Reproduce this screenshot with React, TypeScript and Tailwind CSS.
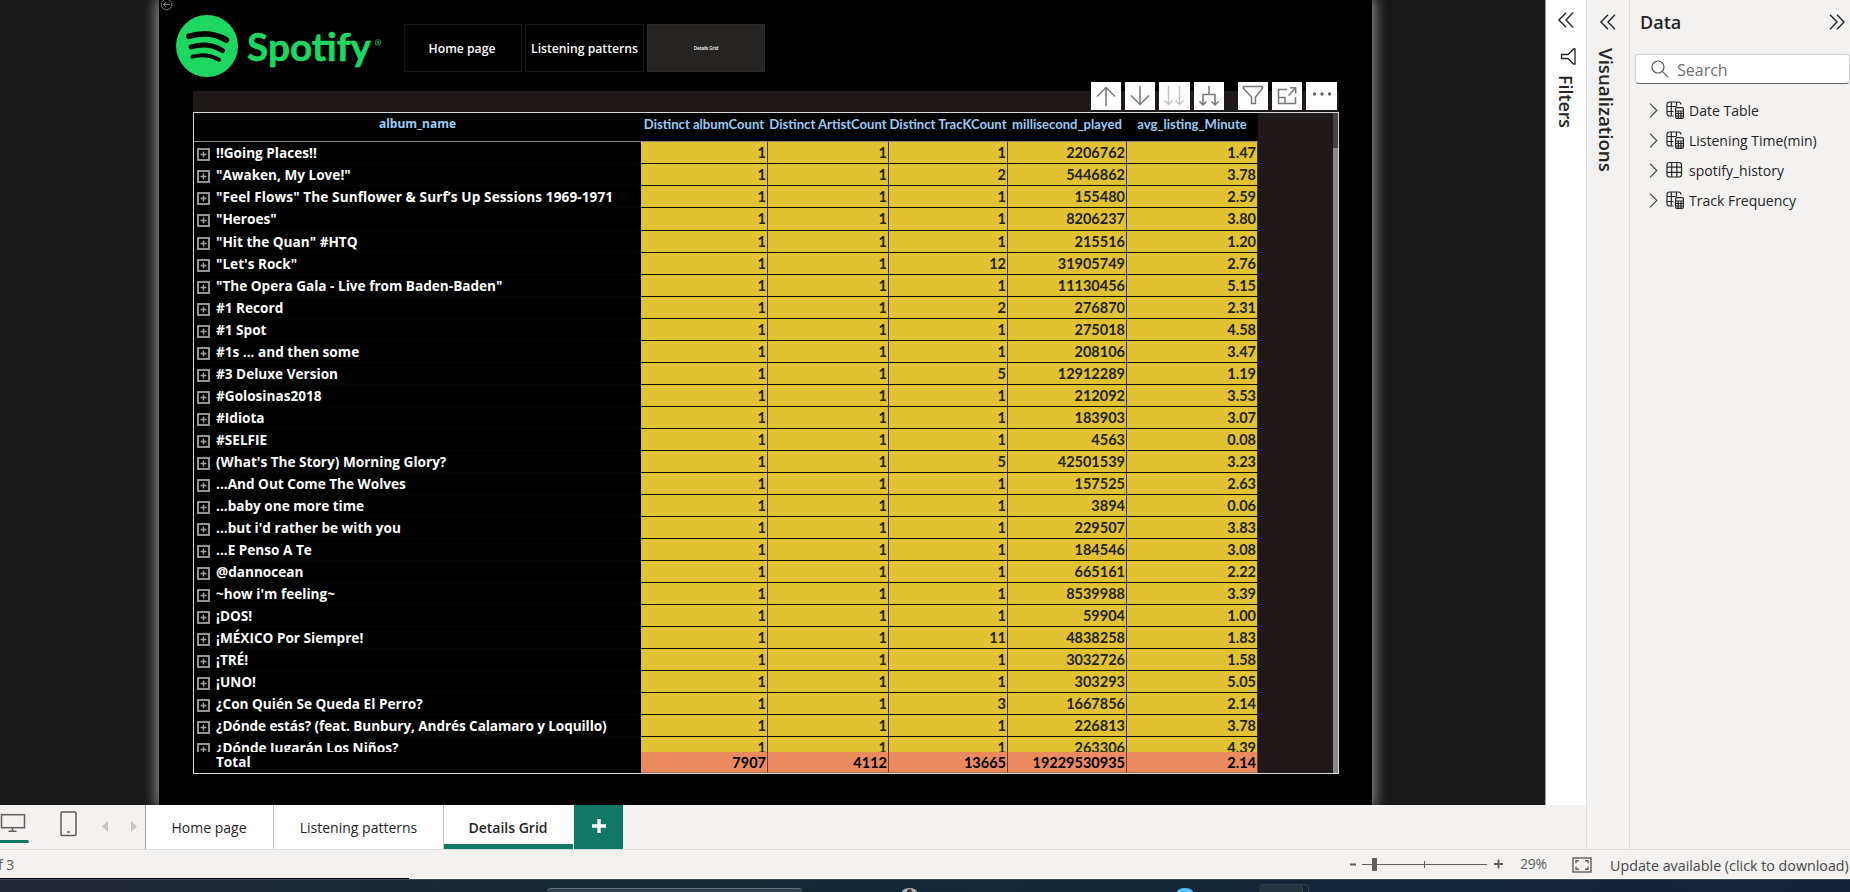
import React from "react";

type Row = [string, number, number, number, string, string];

const rows: Row[] = [
  ["!!Going Places!!", 1, 1, 1, "2206762", "1.47"],
  ["\"Awaken, My Love!\"", 1, 1, 2, "5446862", "3.78"],
  ["\"Feel Flows\" The Sunflower & Surf’s Up Sessions 1969-1971", 1, 1, 1, "155480", "2.59"],
  ["\"Heroes\"", 1, 1, 1, "8206237", "3.80"],
  ["\"Hit the Quan\" #HTQ", 1, 1, 1, "215516", "1.20"],
  ["\"Let's Rock\"", 1, 1, 12, "31905749", "2.76"],
  ["\"The Opera Gala - Live from Baden-Baden\"", 1, 1, 1, "11130456", "5.15"],
  ["#1 Record", 1, 1, 2, "276870", "2.31"],
  ["#1 Spot", 1, 1, 1, "275018", "4.58"],
  ["#1s ... and then some", 1, 1, 1, "208106", "3.47"],
  ["#3 Deluxe Version", 1, 1, 5, "12912289", "1.19"],
  ["#Golosinas2018", 1, 1, 1, "212092", "3.53"],
  ["#Idiota", 1, 1, 1, "183903", "3.07"],
  ["#SELFIE", 1, 1, 1, "4563", "0.08"],
  ["(What's The Story) Morning Glory?", 1, 1, 5, "42501539", "3.23"],
  ["...And Out Come The Wolves", 1, 1, 1, "157525", "2.63"],
  ["...baby one more time", 1, 1, 1, "3894", "0.06"],
  ["...but i'd rather be with you", 1, 1, 1, "229507", "3.83"],
  ["...E Penso A Te", 1, 1, 1, "184546", "3.08"],
  ["@dannocean", 1, 1, 1, "665161", "2.22"],
  ["~how i'm feeling~", 1, 1, 1, "8539988", "3.39"],
  ["¡DOS!", 1, 1, 1, "59904", "1.00"],
  ["¡MÉXICO Por Siempre!", 1, 1, 11, "4838258", "1.83"],
  ["¡TRÉ!", 1, 1, 1, "3032726", "1.58"],
  ["¡UNO!", 1, 1, 1, "303293", "5.05"],
  ["¿Con Quién Se Queda El Perro?", 1, 1, 3, "1667856", "2.14"],
  ["¿Dónde estás? (feat. Bunbury, Andrés Calamaro y Loquillo)", 1, 1, 1, "226813", "3.78"],
  ["¿Dónde Jugarán Los Niños?", 1, 1, 1, "263306", "4.39"],
];

const headers = ["Distinct albumCount", "Distinct ArtistCount", "Distinct TracKCount", "millisecond_played", "avg_listing_Minute"];
const totals = ["7907", "4112", "13665", "19229530935", "2.14"];
const tableGrid = "grid grid-cols-[447px_127px_121px_119px_119px_131px]";

function nameTracking(name: string) {
  if (name.startsWith("\"Feel")) return "tracking-[0.1px]";
  if (name.startsWith("¿Dónde estás")) return "tracking-[-0.09px]";
  return "";
}

function ExpandBox() {
  return (
    <svg className="mt-[6px] h-[13px] w-[13px] shrink-0" viewBox="0 0 13 13" fill="none" stroke="#a3a3a3">
      <rect x="1" y="1" width="11" height="11" strokeWidth="1.8" />
      <path d="M3.5 6.5h6M6.5 3.5v6" strokeWidth="1.4" />
    </svg>
  );
}

function Chevrons({ flip }: { flip?: boolean }) {
  return (
    <svg className="h-4 w-4" viewBox="0 0 16 16" fill="none" stroke="#252423" strokeWidth="1.4">
      {flip ? <path d="M1 .8 8 8l-7 7.2M8 .8 15 8l-7 7.2" /> : <path d="M8 .8 1 8l7 7.2M15 .8 8 8l7 7.2" />}
    </svg>
  );
}

function SpotifyLogo() {
  return (
    <svg className="h-[66px] w-[212px]" viewBox="0 0 212 66">
      <circle cx="31" cy="33" r="31" fill="#1ed760" />
      <g fill="none" stroke="#000" strokeLinecap="round">
        <path d="M13 23.3Q34 17 50.3 27" strokeWidth="5.8" />
        <path d="M15 34Q32 28.8 46.6 37.6" strokeWidth="4.9" />
        <path d="M16.4 43.6Q31 39.6 43 46.8" strokeWidth="4" />
      </g>
      <text x="71" y="48" textLength="124" lengthAdjust="spacingAndGlyphs" fill="#1ed760" stroke="#1ed760" strokeWidth=".6" className="font-['Lato',sans-serif] text-[39px] font-bold">Spotify</text>
      <circle cx="202" cy="29.5" r="2.8" fill="none" stroke="#1aa34a" strokeWidth=".9" />
      <text x="202" y="31.2" textAnchor="middle" fill="#1ed760" className="font-['Lato',sans-serif] text-[4px] font-bold">R</text>
    </svg>
  );
}

function Tool({ children, className = "" }: { children: React.ReactNode; className?: string }) {
  return (
    <div className={`flex h-7 w-[30.4px] items-center justify-center bg-white ${className}`}>
      <svg className="h-[22px] w-[24px]" viewBox="0 0 24 22" fill="none" stroke="#777" strokeWidth="1.5">{children}</svg>
    </div>
  );
}

function TableIcon({ calc }: { calc: boolean }) {
  return calc ? (
    <svg className="h-[18px] w-[18px]" viewBox="0 0 18 18" fill="none" stroke="#252423" strokeWidth="1.2">
      <path d="M7.5 15H3.500A2.500 2.500 0 0 1 1 12.500v-9A2.500 2.500 0 0 1 3.500 1H12.500A2.500 2.500 0 0 1 15 3.500M5.300 1v14M10.500 1v4.500M1 5.500h9M1 10.500h6.500" />
      <rect x="9.6" y="6.6" width="7.8" height="10.8" rx="1.4" fill="#f3f2f1" />
      <path d="M9.6 10h7.8M9.6 12.5h7.8M9.6 15h7.8M12.300 10v7M14.900 10v7" />
    </svg>
  ) : (
    <svg className="h-[18px] w-[18px]" viewBox="0 0 18 18" fill="none" stroke="#252423" strokeWidth="1.2">
      <rect x="1" y="1.5" width="14.5" height="14.5" rx="2.5" />
      <path d="M5.700 1.500V16M10.800 1.500V16M1 6.200h14.500M1 11.300h14.500" />
    </svg>
  );
}

function ReportPage() {
  return (
    <div className="ml-[159px] flex h-[805px] w-[1213px] flex-col bg-black shadow-[0_0_13px_2px_rgba(255,255,255,0.58)]">
      <div className="flex h-[91px] items-start">
        <svg className="mt-[-2px] ml-[1px] h-[13px] w-[13px]" viewBox="0 0 13 13" fill="none" stroke="#777" strokeWidth="1">
          <circle cx="6.5" cy="6.5" r="5.3" />
          <path d="M10 6.500H3.500M6 4 3.500 6.500 6 9" />
        </svg>
        <div className="mt-[13px] ml-[3px]"><SpotifyLogo /></div>
        <div className="mt-6 ml-[16px] flex gap-[3px] font-['Open_Sans',sans-serif] text-[12.2px] font-semibold text-white">
          <div className="flex h-[48px] w-[118px] items-center justify-center border border-[#141414] pt-[2px] pr-[2px]">Home page</div>
          <div className="flex h-[48px] w-[119px] items-center justify-center border border-[#141414] pt-[2px] whitespace-nowrap">Listening patterns</div>
          <div className="flex h-[48px] w-[118px] items-center justify-center border border-[#2d2c2b] bg-[#252423] text-[4.6px] tracking-[-0.1px]">Details Grid</div>
        </div>
      </div>
      <div className="ml-[34px] flex h-[21px] w-[1146px] items-end bg-[#1f1a19]">
        <div className="mb-[2px] ml-[897.5px] flex gap-[4px]">
          <Tool><path d="M12 21V2.500M3 11.500l9-9 9 9" /></Tool>
          <Tool><path d="M12 1v18.500M3 10.500l9 9 9-9" /></Tool>
          <Tool><path stroke="#c6c6c6" d="M6.500 1v19M2.500 15.500l4 4 4-4M17.500 1v19M13.500 15.500l4 4 4-4" /></Tool>
          <Tool><path d="M12 1v8.500M6 20V9.500h12V20M2.500 16.500 6 20l3.500-3.500M14.500 16.500 18 20l3.500-3.500" /></Tool>
          <Tool className="ml-[9.6px]"><path d="M2.500 1.500h19v2L14.500 12v6.500h-4V12l-8-8.500z" /></Tool>
          <Tool><path d="M12 4.500H3.500v14h17V12M3.500 12.500H10v6M13.500 10.500l7-7.500M15 2.800h5.700v5.700" /></Tool>
          <Tool><g fill="#666" stroke="none"><circle cx="4.5" cy="9" r="1.7" /><circle cx="12" cy="9" r="1.7" /><circle cx="19.5" cy="9" r="1.7" /></g></Tool>
        </div>
      </div>
      <div className="ml-[34px] flex h-[662px] w-[1146px] border border-[#d8d8d8] bg-[#1f1a19]">
        <div className="flex h-[660px] w-[1064px] flex-col font-['Lato',sans-serif] font-bold">
          <div className={`${tableGrid} h-[29.4px] shrink-0 border-b border-[#8c8484] bg-black text-center text-[13.1px] leading-[22px] text-[#9acbf7]`}>
            <div className="font-['Open_Sans',sans-serif] text-[12px]">album_name</div>
            {headers.map((h) => <div key={h} className="pr-px whitespace-nowrap">{h}</div>)}
          </div>
          <div className="h-[609.6px] shrink-0 overflow-hidden">
            {rows.map(([name, ...vals]) => (
              <div key={name} className={`${tableGrid} h-[22.04px] grid-rows-[22.04px]`}>
                <div className="flex gap-[6px] border-b border-[#050505] bg-black pl-[3px] font-['Open_Sans',sans-serif] text-[13.6px] leading-[22px] whitespace-nowrap text-white">
                  <ExpandBox />
                  <span className={nameTracking(name)}>{name}</span>
                </div>
                {vals.map((v, i) => (
                  <div key={i} className="border-r border-b border-r-[#3a330f] border-b-[#0e0d05] bg-[#e0c232] pr-px text-right text-[14.5px] leading-[22px] text-[#252423]">{v}</div>
                ))}
              </div>
            ))}
          </div>
          <div className={`${tableGrid} h-[21px] shrink-0 grid-rows-[21px] text-black`}>
            <div className="bg-black pl-[22px] font-['Open_Sans',sans-serif] text-[13.6px] leading-[20px] text-white">Total</div>
            {totals.map((t) => (
              <div key={t} className="border-r border-b border-r-[#6b3f2c] border-b-[#b06a4b] bg-[#eb895f] pr-px text-right text-[14.5px] leading-[21px]">{t}</div>
            ))}
          </div>
        </div>
        <div className="ml-auto flex w-[5px] flex-col bg-[#8a8886]">
          <div className="h-[35px] bg-[#454240]" />
        </div>
      </div>
    </div>
  );
}

function TabBar() {
  return (
    <div className="flex h-[44px] bg-[#f3f2f1] font-['Open_Sans',sans-serif] text-sm text-[#252423]">
      <div className="flex w-[146px] border-r border-[#a19f9d]">
        <div className="flex h-[38px] w-[29px] flex-col justify-between">
          <svg className="mt-[8px] h-[20px] w-[26px]" viewBox="0 0 26 20" fill="none" stroke="#605e5c" strokeWidth="1.5">
            <rect x="1.5" y="1.7" width="23" height="13" />
            <path d="M12.500 15v3M8.500 18.200h8" />
          </svg>
          <div className="h-[3px] rounded-r bg-[#117865]" />
        </div>
        <svg className="mt-[6px] ml-[31px] h-[26px] w-[17px]" viewBox="0 0 17 26" fill="none" stroke="#605e5c" strokeWidth="1.5">
          <rect x="1" y="1" width="15" height="23.5" rx="1.2" />
          <path d="M7 21h3" />
        </svg>
        <svg className="mt-[16px] ml-[24px] h-[11px] w-[36px]" viewBox="0 0 36 11" fill="#c8c6c4">
          <path d="M7 0v11L1 5.500zM30 0v11l6-5.500z" />
        </svg>
      </div>
      <div className="flex w-[128px] items-center justify-center border-r border-[#c8c6c4] bg-white pt-[2px] pr-px">Home page</div>
      <div className="flex w-[170px] items-center justify-center border-r border-[#c8c6c4] bg-white pt-[2px]">Listening patterns</div>
      <div className="flex w-[129px] items-center justify-center border-b-[5px] border-[#117865] bg-white pt-[6px] pr-px font-semibold">Details Grid</div>
      <div className="ml-px flex w-[49px] items-center justify-center bg-[#117865]">
        <svg className="mb-[3px] h-[14px] w-[14px]" viewBox="0 0 14 14" stroke="#fff" strokeWidth="3.4"><path d="M7 0v14M0 7h14" /></svg>
      </div>
    </div>
  );
}

function DataPane() {
  const tables: [string, boolean][] = [["Date Table", true], ["Listening Time(min)", true], ["spotify_history", false], ["Track Frequency", true]];
  return (
    <div className="flex w-[221px] flex-col border-l border-[#e1dfdd] pl-[5px]">
      <div className="mt-[9px] flex h-[26px] items-center justify-between pr-[5px] pl-[5px]">
        <span className="text-[18px] font-semibold">Data</span>
        <Chevrons flip />
      </div>
      <div className="mt-[19px] flex h-[30px] items-center rounded-[4px] border border-[#d1d1d1] border-b-[#616161] bg-white pl-[15px]">
        <svg className="h-[18px] w-[18px]" viewBox="0 0 18 18" fill="none" stroke="#605e5c" strokeWidth="1.2"><circle cx="7" cy="7" r="6" /><path d="m11.300 11.300 6 6" /></svg>
        <span className="ml-[8px] pt-px text-base text-[#707070]">Search</span>
      </div>
      <div className="mt-[11px] text-sm">
        {tables.map(([n, calc]) => (
          <div key={n} className="flex h-[30px] items-center pl-[14px]">
            <svg className="h-[15px] w-[9px]" viewBox="0 0 9 15" fill="none" stroke="#484644" strokeWidth="1.2"><path d="m1 .6 6.800 6.900L1 14.400" /></svg>
            <span className="mr-[5px] ml-[8px]"><TableIcon calc={calc} /></span>
            <span className="pt-[2px] whitespace-nowrap">{n}</span>
          </div>
        ))}
      </div>
    </div>
  );
}

function StatusBar() {
  return (
    <div className="flex h-[29px] items-center border-t border-[#e1dfdd] font-['Open_Sans',sans-serif] text-sm whitespace-nowrap text-[#605e5c]">
      <span className="ml-[-2px] w-[1351px] pt-[2px]">f 3</span>
      <svg className="h-[16px] w-[156px]" viewBox="0 0 156 16" fill="none" stroke="#605e5c">
        <path d="M1 8.500h6" strokeWidth="2" />
        <path d="M13 8.500h125M75.500 5v7" />
        <path d="M25.500 2v13" strokeWidth="5" />
        <path d="M145 8h9M149.500 3.500v9" strokeWidth="1.8" />
      </svg>
      <span className="ml-[15px] w-[52px] tracking-[-0.3px]">29%</span>
      <svg className="mt-[2px] h-[16px] w-[20px]" viewBox="0 0 20 16" fill="none" stroke="#605e5c" strokeWidth="1.4">
        <rect x="1" y="1" width="18" height="14" />
        <path d="M7 3.800H4v2.500M13 3.800h3v2.500M7 12.200H4V9.700M13 12.200h3V9.700" />
      </svg>
      <span className="ml-[18px] pt-[4px] text-[14.29px] text-[#484644]">Update available (click to download)</span>
    </div>
  );
}

export default function App() {
  return (
    <div className="flex h-[892px] w-[1850px] flex-col overflow-hidden bg-[#f3f2f1] font-['Open_Sans',sans-serif] text-[#252423]">
      <div className="flex h-[849px]">
        <div className="flex w-[1586px] flex-col">
          <div className="flex h-[805px]">
            <div className="w-[1545px] overflow-hidden bg-[#181818]"><ReportPage /></div>
            <div className="flex w-[41px] flex-col items-center border-l border-[#a19f9d] bg-white pt-[12px]">
              <Chevrons />
              <svg className="mt-[20px] ml-[4px] h-[17px] w-[16px]" viewBox="0 0 16 17" fill="none" stroke="#252423" strokeWidth="1.3">
                <path d="M15 1v15h-1.500L8 10.500H1.500v-4H8L13.500 1z" />
              </svg>
              <span className="mt-[10px] text-[17.8px] leading-[24px] font-semibold [writing-mode:vertical-rl]">Filters</span>
            </div>
          </div>
          <TabBar />
        </div>
        <div className="flex w-[43px] flex-col items-center border-l border-[#e1dfdd] pt-[14px]">
          <Chevrons />
          <span className="mt-[18px] mr-[4px] text-[18.7px] leading-[24px] font-semibold [writing-mode:vertical-rl]">Visualizations</span>
        </div>
        <DataPane />
      </div>
      <StatusBar />
      <div className="flex h-px bg-white"><div className="w-[409px] bg-black" /></div>
      <div className="flex h-[13px] items-end overflow-hidden border-t border-[#3c4a55] bg-linear-to-r from-[#222633] via-[#122936] via-35% to-[#13233b]">
        <div className="ml-[547px] h-[4px] w-[255px] rounded-t-[5px] border-t border-[#64717c] bg-[#33424f]" />
        <div className="ml-[100px] h-[4px] w-[15px] rounded-[50%_50%_0_0/100%_100%_0_0] bg-[#a9b0b5] px-[5px] pt-px"><div className="h-[3px] rounded-t-full bg-[#57302c]" /></div>
        <div className="ml-[260px] h-[4px] w-[16px] rounded-[50%_50%_0_0/100%_100%_0_0] bg-[#4cc2ff]" />
        <div className="ml-[66px] h-[8px] w-[50px] rounded-t-[4px] border-t border-r border-[#32434f] pr-[5px]">
          <div className="h-full rounded-t-[4px] border-r border-[#3a4a55] bg-[#223541]" />
        </div>
      </div>
    </div>
  );
}
